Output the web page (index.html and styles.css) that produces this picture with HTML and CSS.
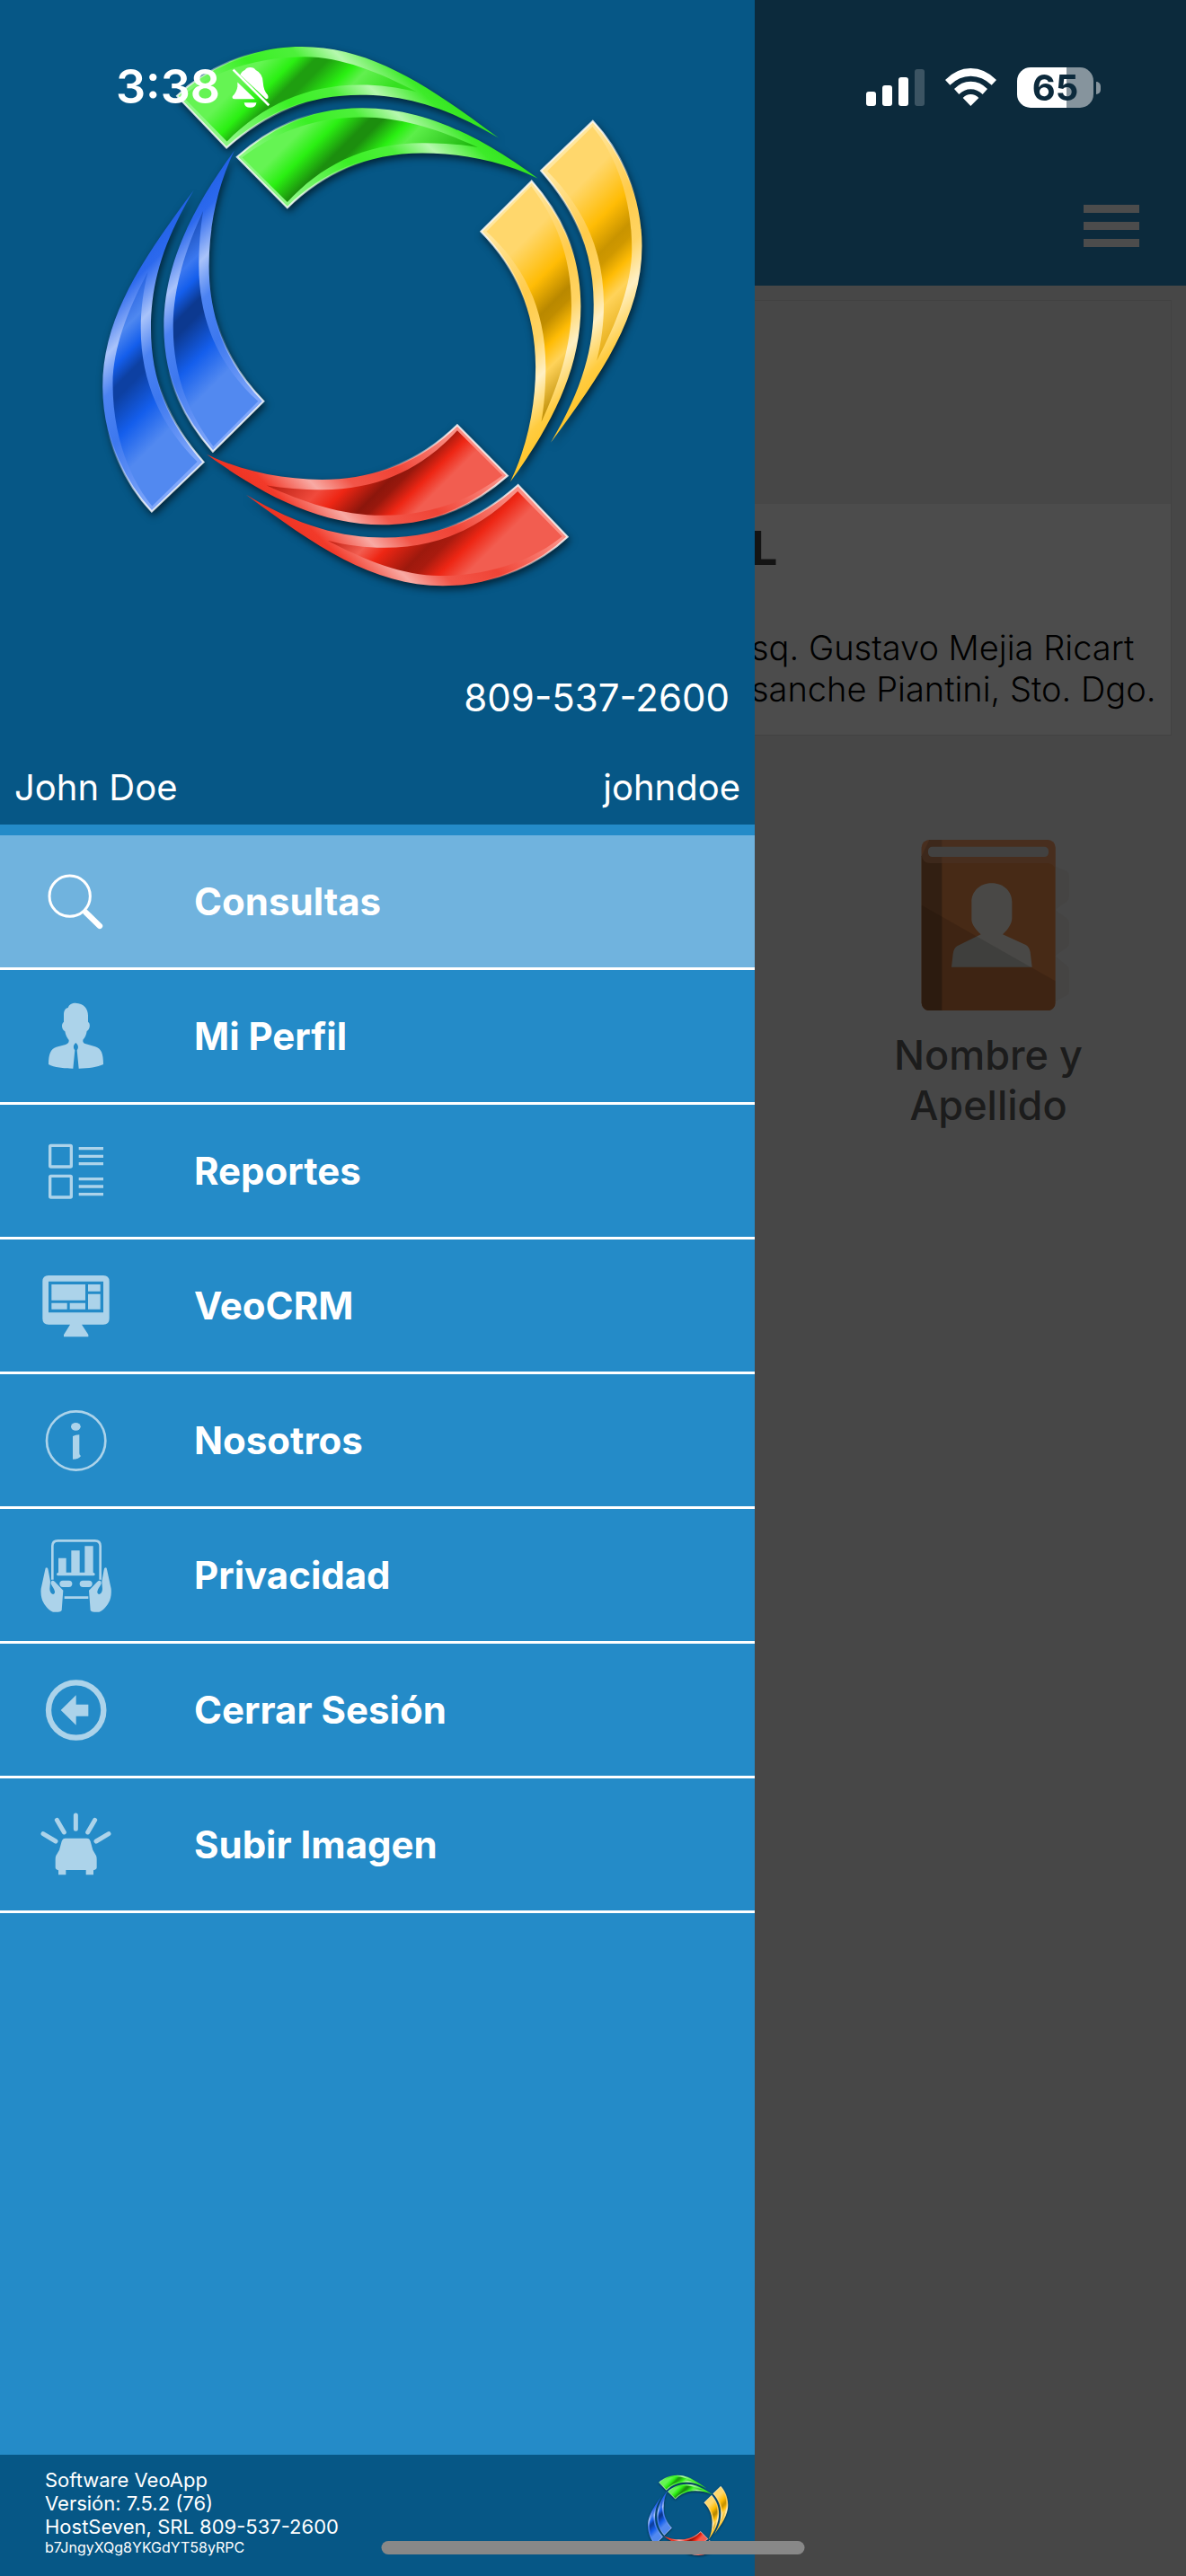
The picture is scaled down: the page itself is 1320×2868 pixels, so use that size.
FILE: index.html
```html
<!DOCTYPE html>
<html lang="es">
<head>
  <meta charset="UTF-8" />
  <meta name="viewport" content="width=device-width, initial-scale=1" />
  <title>VeoApp</title>
  <link rel="stylesheet" href="styles.css">
</head>
<body>
  <!-- Logo compartido: un brazo doble girado cuatro veces -->
  <svg class="sprite" aria-hidden="true">
    <defs>
      <path id="arm-a" d="M270 200C335 138 450 74 590 74C770 74 920 178 1095 308C955 225 850 198 740 198C610 198 500 242 397 333Z"/>
      <path id="arm-b" d="M424 357C500 290 600 231 745 231C905 231 1050 305 1196 412C1105 368 1000 347 900 347C755 347 640 402 553 487Z"/>
      <path id="glass-a" d="M284 201C350 146 460 100 598 100C690 100 790 140 885 190C835 178 790 172 740 172C600 172 490 225 398 317Z"/>
      <path id="glass-b" d="M437 358C515 300 610 255 745 255C850 255 950 290 1042 332C1000 325 950 321 900 321C745 321 635 383 553 473Z"/>

      <linearGradient id="rim-green" gradientUnits="userSpaceOnUse" x1="450" y1="350" x2="850" y2="-50">
        <stop offset="0" stop-color="#8cf783"/><stop offset=".3" stop-color="#3af024"/><stop offset=".48" stop-color="#4df03a"/><stop offset=".61" stop-color="#b6f8ae"/><stop offset=".76" stop-color="#3deb29"/><stop offset="1" stop-color="#22d60d"/>
      </linearGradient>
      <linearGradient id="rim-gold" gradientUnits="userSpaceOnUse" x1="450" y1="350" x2="850" y2="-50">
        <stop offset="0" stop-color="#ffe69d"/><stop offset=".3" stop-color="#ffcb4a"/><stop offset=".48" stop-color="#ffd463"/><stop offset=".61" stop-color="#fff0c4"/><stop offset=".76" stop-color="#ffcc40"/><stop offset="1" stop-color="#ffba06"/>
      </linearGradient>
      <linearGradient id="rim-red" gradientUnits="userSpaceOnUse" x1="450" y1="350" x2="850" y2="-50">
        <stop offset="0" stop-color="#fa8f85"/><stop offset=".3" stop-color="#f04436"/><stop offset=".48" stop-color="#f25548"/><stop offset=".61" stop-color="#f8aaa4"/><stop offset=".76" stop-color="#f23a2a"/><stop offset="1" stop-color="#e62412"/>
      </linearGradient>
      <linearGradient id="rim-blue" gradientUnits="userSpaceOnUse" x1="450" y1="350" x2="850" y2="-50">
        <stop offset="0" stop-color="#7ea6fa"/><stop offset=".3" stop-color="#3d78ef"/><stop offset=".48" stop-color="#4c83f2"/><stop offset=".61" stop-color="#a9c3fa"/><stop offset=".76" stop-color="#2c69ee"/><stop offset="1" stop-color="#1356dc"/>
      </linearGradient>
      <linearGradient id="edge" gradientUnits="userSpaceOnUse" x1="450" y1="350" x2="600" y2="200">
        <stop offset="0" stop-color="#fff" stop-opacity=".8"/><stop offset="1" stop-color="#fff" stop-opacity="0"/>
      </linearGradient>

      <linearGradient id="green-a" gradientUnits="userSpaceOnUse" x1="250" y1="250" x2="500" y2="500">
        <stop offset=".2" stop-color="#65f453"/><stop offset=".36" stop-color="#2af012"/><stop offset=".46" stop-color="#1f9e10"/><stop offset=".53" stop-color="#1f9e10"/><stop offset=".69" stop-color="#2af012"/><stop offset=".78" stop-color="#62f04f"/><stop offset="1" stop-color="#35e020"/>
      </linearGradient>
      <linearGradient id="green-b" gradientUnits="userSpaceOnUse" x1="400" y1="400" x2="675" y2="675">
        <stop offset=".14" stop-color="#65f453"/><stop offset=".27" stop-color="#2af012"/><stop offset=".41" stop-color="#1c8e0e"/><stop offset=".47" stop-color="#1c8e0e"/><stop offset=".6" stop-color="#2af012"/><stop offset=".68" stop-color="#5cef49"/><stop offset="1" stop-color="#1fb80f"/>
      </linearGradient>
      <linearGradient id="gold-a" gradientUnits="userSpaceOnUse" x1="850" y1="850" x2="1125" y2="1125" gradientTransform="rotate(-90 771 766)">
        <stop offset=".06" stop-color="#ffd76c"/><stop offset=".31" stop-color="#ffbc05"/><stop offset=".47" stop-color="#c99400"/><stop offset=".53" stop-color="#cf9800"/><stop offset=".63" stop-color="#ffbc05"/><stop offset=".73" stop-color="#ffd35a"/><stop offset="1" stop-color="#e0a50a"/>
      </linearGradient>
      <linearGradient id="gold-b" gradientUnits="userSpaceOnUse" x1="850" y1="850" x2="1125" y2="1125" gradientTransform="rotate(-90 771 766)">
        <stop offset=".06" stop-color="#ffd76c"/><stop offset=".31" stop-color="#ffbc05"/><stop offset=".48" stop-color="#b98800"/><stop offset=".54" stop-color="#c08d00"/><stop offset=".66" stop-color="#ffbc05"/><stop offset=".77" stop-color="#ffd35a"/><stop offset="1" stop-color="#b98800"/>
      </linearGradient>
      <linearGradient id="red-a" gradientUnits="userSpaceOnUse" x1="1000" y1="1000" x2="1250" y2="1250" gradientTransform="rotate(-180 771 766)">
        <stop offset="0" stop-color="#c01e10"/><stop offset=".22" stop-color="#f25d50"/><stop offset=".34" stop-color="#ee2614"/><stop offset=".54" stop-color="#9d190d"/><stop offset=".62" stop-color="#a81b0f"/><stop offset=".74" stop-color="#ee2614"/><stop offset=".88" stop-color="#f25d50"/>
      </linearGradient>
      <linearGradient id="red-b" gradientUnits="userSpaceOnUse" x1="850" y1="850" x2="1075" y2="1075" gradientTransform="rotate(-180 771 766)">
        <stop offset="0" stop-color="#b51c10"/><stop offset=".33" stop-color="#f04a3c"/><stop offset=".47" stop-color="#ee2614"/><stop offset=".67" stop-color="#8c160c"/><stop offset=".74" stop-color="#98180d"/><stop offset=".87" stop-color="#ee2614"/><stop offset="1" stop-color="#f25d50"/>
      </linearGradient>
      <linearGradient id="blue-a" gradientUnits="userSpaceOnUse" x1="400" y1="400" x2="675" y2="675" gradientTransform="rotate(-270 771 766)">
        <stop offset="0" stop-color="#1450d8"/><stop offset=".24" stop-color="#4f88f0"/><stop offset=".37" stop-color="#145eec"/><stop offset=".47" stop-color="#0d40a2"/><stop offset=".53" stop-color="#0d40a2"/><stop offset=".72" stop-color="#145eec"/><stop offset=".92" stop-color="#5289f0"/>
      </linearGradient>
      <linearGradient id="blue-b" gradientUnits="userSpaceOnUse" x1="400" y1="400" x2="675" y2="675" gradientTransform="rotate(-270 771 766)">
        <stop offset="0" stop-color="#0e3fa5"/><stop offset=".24" stop-color="#3b78f0"/><stop offset=".34" stop-color="#145eec"/><stop offset=".45" stop-color="#0c3990"/><stop offset=".52" stop-color="#0c3990"/><stop offset=".72" stop-color="#145eec"/><stop offset=".92" stop-color="#5289f0"/>
      </linearGradient>
    </defs>

    <symbol id="logo" viewBox="-46 -46 1660 1660">
      <g>
        <use href="#arm-a" fill="url(#rim-green)"/><use href="#glass-a" fill="url(#green-a)"/><use href="#arm-a" fill="none" stroke="url(#edge)" stroke-width="5"/>
        <use href="#arm-b" fill="url(#rim-green)"/><use href="#glass-b" fill="url(#green-b)"/><use href="#arm-b" fill="none" stroke="url(#edge)" stroke-width="5"/>
      </g>
      <g transform="rotate(90 771 766)">
        <use href="#arm-a" fill="url(#rim-gold)"/><use href="#glass-a" fill="url(#gold-a)"/><use href="#arm-a" fill="none" stroke="url(#edge)" stroke-width="5"/>
        <use href="#arm-b" fill="url(#rim-gold)"/><use href="#glass-b" fill="url(#gold-b)"/><use href="#arm-b" fill="none" stroke="url(#edge)" stroke-width="5"/>
      </g>
      <g transform="rotate(180 771 766)">
        <use href="#arm-a" fill="url(#rim-red)"/><use href="#glass-a" fill="url(#red-a)"/><use href="#arm-a" fill="none" stroke="url(#edge)" stroke-width="5"/>
        <use href="#arm-b" fill="url(#rim-red)"/><use href="#glass-b" fill="url(#red-b)"/><use href="#arm-b" fill="none" stroke="url(#edge)" stroke-width="5"/>
      </g>
      <g transform="rotate(270 771 766)">
        <use href="#arm-a" fill="url(#rim-blue)"/><use href="#glass-a" fill="url(#blue-a)"/><use href="#arm-a" fill="none" stroke="url(#edge)" stroke-width="5"/>
        <use href="#arm-b" fill="url(#rim-blue)"/><use href="#glass-b" fill="url(#blue-b)"/><use href="#arm-b" fill="none" stroke="url(#edge)" stroke-width="5"/>
      </g>
    </symbol>
  </svg>

  <div class="page">
    <header class="topbar">
      <button class="btn-menu" aria-label="Menú"><span></span><span></span><span></span></button>
    </header>
    <main>
      <section class="card">
        <div class="card-image"></div>
        <div class="card-body">
          <h1>L</h1>
          <p>sq. Gustavo Mejia Ricart<br>sanche Piantini, Sto. Dgo.</p>
        </div>
      </section>
      <section class="tiles">
        <a class="tile" href="#">
          <svg viewBox="135 110 570 570" aria-hidden="true">
            <path fill="#e0ddd5" opacity=".55" d="M640 197L682 215Q690 220 690 230V300Q690 310 682 316L643 344L682 372Q690 377 690 387V455Q690 465 682 470L643 498L682 530Q690 536 690 545V618Q690 626 682 630L640 652Z"/>
            <rect x="197" y="110" width="447" height="571" rx="26" fill="#ee8c4a"/>
            <path fill="#a9693c" d="M197 165V655Q200 678 223 681H265V110H223Z"/>
            <path fill="#f3ae84" opacity=".45" d="M197 140Q197 110 227 110H616Q644 110 644 138V212Q640 188 616 188H227Q200 188 197 160Z"/>
            <rect x="219" y="133" width="402" height="34" rx="14" fill="#dcdad6"/>
            <path fill="#f4f2ea" d="M431 255C473 255 499 284 499 318V372C499 390 486 409 468 426L545 461Q557 468 560 485L566 535H297L302 492Q304 472 316 465L395 426C380 412 364 392 364 376V318C364 284 390 255 431 255Z"/>
            <path fill="#000" opacity=".13" d="M197 328L644 582V655Q640 681 616 681H223Q200 678 197 655Z"/>
          </svg>
          <span>Nombre y<br>Apellido</span>
        </a>
      </section>
    </main>
  </div>

  <div class="scrim"></div>

  <aside class="drawer">
    <div class="drawer-header">
      <svg class="logo" role="img" aria-label="VeoApp"><use href="#logo"/></svg>
      <p class="phone">809-537-2600</p>
      <p class="user"><span>John Doe</span><span>johndoe</span></p>
    </div>

    <nav class="menu">
      <a class="active" href="#">
        <svg viewBox="126 94 252 252" aria-hidden="true"><circle cx="233" cy="201" r="68" fill="none" stroke="#fff" stroke-width="9"/><path d="M286 255L333 301" stroke="#fff" stroke-width="19" stroke-linecap="round"/></svg>
        Consultas
      </a>
      <a href="#">
        <svg viewBox="126 94 252 252" aria-hidden="true"><path d="M227 124C231 112 240 108 252 108C280 109 294 127 294 150V171C301 175 302 189 294 199L290 202C288 215 284 223 277 231C276 239 279 242 287 245L318 254C338 260 345 277 345 313C326 322 295 327 263 327L257 266C263 258 262 248 253 241C244 248 244 258 250 266L244 327C212 327 181 323 162 313C162 278 169 262 188 255L219 247C228 243 230 240 230 232C223 224 219 215 217 203C205 195 204 177 213 171V146C213 133 219 125 227 124Z"/></svg>
        Mi Perfil
      </a>
      <a href="#">
        <svg viewBox="126 544 252 252" aria-hidden="true"><g fill="none" stroke="#fff" stroke-width="10"><rect x="167" y="584" width="71" height="71" rx="3"/><rect x="167" y="686" width="71" height="71" rx="3"/><path d="M263 594H345M263 620H345M263 645H345M263 696H345M263 721H345M263 747H345"/></g></svg>
        Reportes
      </a>
      <a href="#">
        <svg viewBox="126 994 252 252" aria-hidden="true"><path fill-rule="evenodd" d="M162 1018H345Q365 1018 365 1038V1162Q365 1182 345 1182H273L295 1216V1223H213V1216L234 1182H162Q142 1182 142 1162V1038Q142 1018 162 1018ZM162 1038V1142H345V1038Z"/><path d="M172 1048H285V1101H172ZM294 1048H335V1071H294ZM294 1080H335V1131H294ZM172 1110H224V1131H172ZM233 1110H285V1131H233Z"/></svg>
        VeoCRM
      </a>
      <a href="#">
        <svg viewBox="126 64 252 252" aria-hidden="true"><circle cx="254" cy="190" r="98" fill="none" stroke="#fff" stroke-width="8"/><ellipse cx="253" cy="143" rx="16" ry="13"/><path d="M243 175Q252 170 265 170V232Q265 238 270 241Q264 252 243 252Z"/></svg>
        Nosotros
      </a>
      <a href="#">
        <svg viewBox="126 514 252 252" aria-hidden="true">
          <path d="M175 654V542Q175 524 193 524H317Q335 524 335 542V654M215 714H295" fill="none" stroke="#fff" stroke-width="8"/>
          <path d="M195 630V582H221V630H238V557H266V630H283V542H311V630Q317 631 317 636Q317 641 311 641H195Q189 641 189 636Q189 631 195 630Z"/>
          <rect x="199" y="657" width="42" height="22" rx="11"/><rect x="266" y="657" width="42" height="22" rx="11"/>
          <path id="hand" d="M152 615Q160 610 161 622L167 654C170 668 164 680 167 692C171 707 184 705 183 694C181 684 174 678 170 668C169 656 176 654 183 661L211 690L206 757Q203 762 194 762H177Q165 760 148 736Q134 716 137 684Z"/>
          <use href="#hand" transform="matrix(-1 0 0 1 508 0)"/>
        </svg>
        Privacidad
      </a>
      <a href="#">
        <svg viewBox="126 964 252 252" aria-hidden="true"><circle cx="254" cy="1090" r="92" fill="none" stroke="#fff" stroke-width="19"/><path d="M203 1090L254 1040V1071H295V1110H254V1140Z"/></svg>
        Cerrar Sesión
      </a>
      <a href="#">
        <svg viewBox="126 1414 252 252" aria-hidden="true"><path d="M253 1441V1487M190 1457L214 1498M317 1457L293 1498M144 1503L186 1528M363 1503L321 1528" fill="none" stroke="#fff" stroke-width="15" stroke-linecap="round"/><path d="M218 1518H290Q299 1518 302 1528L310 1557L321 1576Q323 1580 323 1588V1616Q323 1622 312 1625V1640H287V1624H220V1640H195V1625Q185 1622 185 1616V1588Q185 1580 187 1576L198 1557L206 1528Q209 1518 218 1518Z"/></svg>
        Subir Imagen
      </a>
    </nav>

    <footer class="drawer-footer">
      <div>
        <p>Software VeoApp</p>
        <p>Versión: 7.5.2 (76)</p>
        <p>HostSeven, SRL 809-537-2600</p>
        <p class="token">b7JngyXQg8YKGdYT58yRPC</p>
      </div>
      <svg class="logo-small" aria-hidden="true"><use href="#logo"/></svg>
    </footer>
  </aside>

  <div class="statusbar">
    <span class="time">3:38</span>
    <svg class="bell" viewBox="410 124 102 110" aria-hidden="true">
      <path d="M427 166L472 210H420Q412 210 414 203Q425 192 427 178ZM434 147Q439 137 446 135Q450 128 460 128Q470 128 474 135Q493 144 493 168Q494 188 505 199Q507 203 506 208L501 210ZM444 219H476Q474 232 460 232Q446 232 444 219Z"/>
      <path d="M416 134L508 226" stroke="#fff" stroke-width="6"/>
    </svg>
    <span class="spacer"></span>
    <svg class="signal" viewBox="0 0 65 41" aria-hidden="true"><rect y="25" width="11" height="16" rx="3"/><rect x="18" y="18" width="11" height="23" rx="3"/><rect x="36" y="9" width="11" height="32" rx="3"/><rect x="54" width="11" height="41" rx="3" opacity=".2"/></svg>
    <svg class="wifi" viewBox="636 225 171 126" aria-hidden="true"><path d="M636 264Q674 225 721 225Q769 225 807 264L791 281Q760 251 721 251Q683 251 652 281ZM666 294Q690 269 721 269Q753 269 777 294L761 312Q743 295 721 295Q700 295 682 312ZM695 324Q706 312 721 312Q737 312 748 324L721 351Z"/></svg>
    <span class="battery">65</span>
  </div>
  <div class="home-indicator"></div>
</body>
</html>
```
FILE: styles.css
```css
/* Básicos */
:root {
  --drawer: min(840px, 85vw);
  --blue: #248bc8;
  --navy: #065786;
}
* {
  box-sizing: border-box;
  margin: 0; padding: 0;
}
body {
  background: #eee;
  font-family: Inter, Roboto, "Liberation Sans", sans-serif;
  font-size: 42px;
  line-height: 48px;
  min-height: 100vh;
}
a {
  color: inherit;
  text-decoration: none;
}
.sprite {
  position: absolute;
  width: 0;
  height: 0;
}

/* Página de fondo */
.topbar {
  background: #288cc8;
  display: flex;
  justify-content: flex-end;
  padding: 222px 46px 37px;
}
.btn-menu {
  background: none;
  border: none;
  cursor: pointer;
  display: flex;
  flex-direction: column;
  gap: 10px;
  padding: 6px;
}
.btn-menu span {
  background: #fff;
  height: 9px;
  width: 62px;
}
.card {
  background: #fff;
  border: 1px solid #ddd;
  margin: 16px 16px 0;
}
.card-image {
  background: #eee;
  height: 226px;
}
.card-body {
  padding: 18px 0 28px calc(var(--drawer) - 21px);
  white-space: nowrap;
}
.card h1 {
  color: #444;
  font-size: 52px;
  font-weight: 700;
  line-height: 64px;
  margin-bottom: 55px;
}
.card p {
  font-size: 38px;
  font-weight: 300;
  line-height: 46px;
}
.tiles {
  display: grid;
  grid-template-columns: repeat(3, 1fr);
  margin-top: 116px;
}
.tile {
  align-items: center;
  color: #5e5e5e;
  display: flex;
  flex-direction: column;
  font-size: 45px;
  font-weight: 500;
  gap: 22px;
  grid-column: 3;
  line-height: 56px;
  text-align: center;
}
.tile svg {
  height: 190px;
  width: 190px;
}
.scrim {
  background: rgba(0, 0, 0, 0.7);
  inset: 0;
  position: fixed;
}

/* Menú lateral */
.drawer {
  background: var(--blue);
  bottom: 0;
  color: #fff;
  display: flex;
  flex-direction: column;
  left: 0;
  position: fixed;
  top: 0;
  width: var(--drawer);
}
.drawer-header {
  background: var(--navy);
  padding-bottom: 17px;
}
.logo {
  aspect-ratio: 1;
  display: block;
  filter: drop-shadow(2px 4px 4px rgba(0, 0, 0, 0.6));
  margin: 0 auto;
  max-width: 720px;
  width: 100%;
}
.phone {
  padding: 33px 28px 52px;
  text-align: right;
}
.user {
  display: flex;
  font-size: 40px;
  justify-content: space-between;
  padding: 0 16px;
}
.menu {
  flex: 1;
  padding-top: 12px;
}
.menu a {
  align-items: center;
  border-bottom: 3px solid #fff;
  display: flex;
  font-weight: 700;
  gap: 90px;
  height: 150px;
  padding-left: 42px;
}
.menu svg {
  fill: #fff;
  height: 84px;
  opacity: 0.62;
  width: 84px;
}
.menu .active {
  background: #70b3de;
}
.menu .active svg {
  opacity: 1;
}
.drawer-footer {
  background: var(--navy);
  display: flex;
  font-size: 22px;
  height: 135px;
  justify-content: space-between;
  line-height: 26px;
  padding: 15px 20px 0 50px;
}
.token {
  font-size: 16px;
  line-height: 20px;
}
.logo-small {
  filter: drop-shadow(0 1px 1px rgba(0, 0, 0, 0.5));
  height: 107px;
  width: 107px;
}

/* Barra de estado del teléfono */
.statusbar {
  align-items: center;
  color: #fff;
  display: flex;
  fill: #fff;
  height: 194px;
  left: 0;
  padding: 0 103px 0 129px;
  position: fixed;
  right: 0;
  top: 0;
}
.time {
  font-size: 52px;
  font-weight: 600;
}
.bell {
  height: 48px;
  margin-left: 12px;
  width: 44px;
}
.spacer {
  flex: 1;
}
.signal {
  height: 41px;
  width: 65px;
}
.wifi {
  height: 42px;
  margin: 0 23px;
  width: 57px;
}
.battery {
  background: linear-gradient(90deg, #fff 65%, #86949d 65%);
  border-radius: 15px;
  color: #0c2a3c;
  font-size: 40px;
  font-weight: 700;
  line-height: 45px;
  position: relative;
  text-align: center;
  width: 85px;
}
.battery::after {
  background: #86949d;
  border-radius: 0 8px 8px 0;
  content: "";
  height: 14px;
  left: 88px;
  position: absolute;
  top: 16px;
  width: 5px;
}
.home-indicator {
  background: #888;
  border-radius: 8px;
  bottom: 24px;
  height: 15px;
  left: 50%;
  position: fixed;
  transform: translateX(-50%);
  width: 471px;
}
```
